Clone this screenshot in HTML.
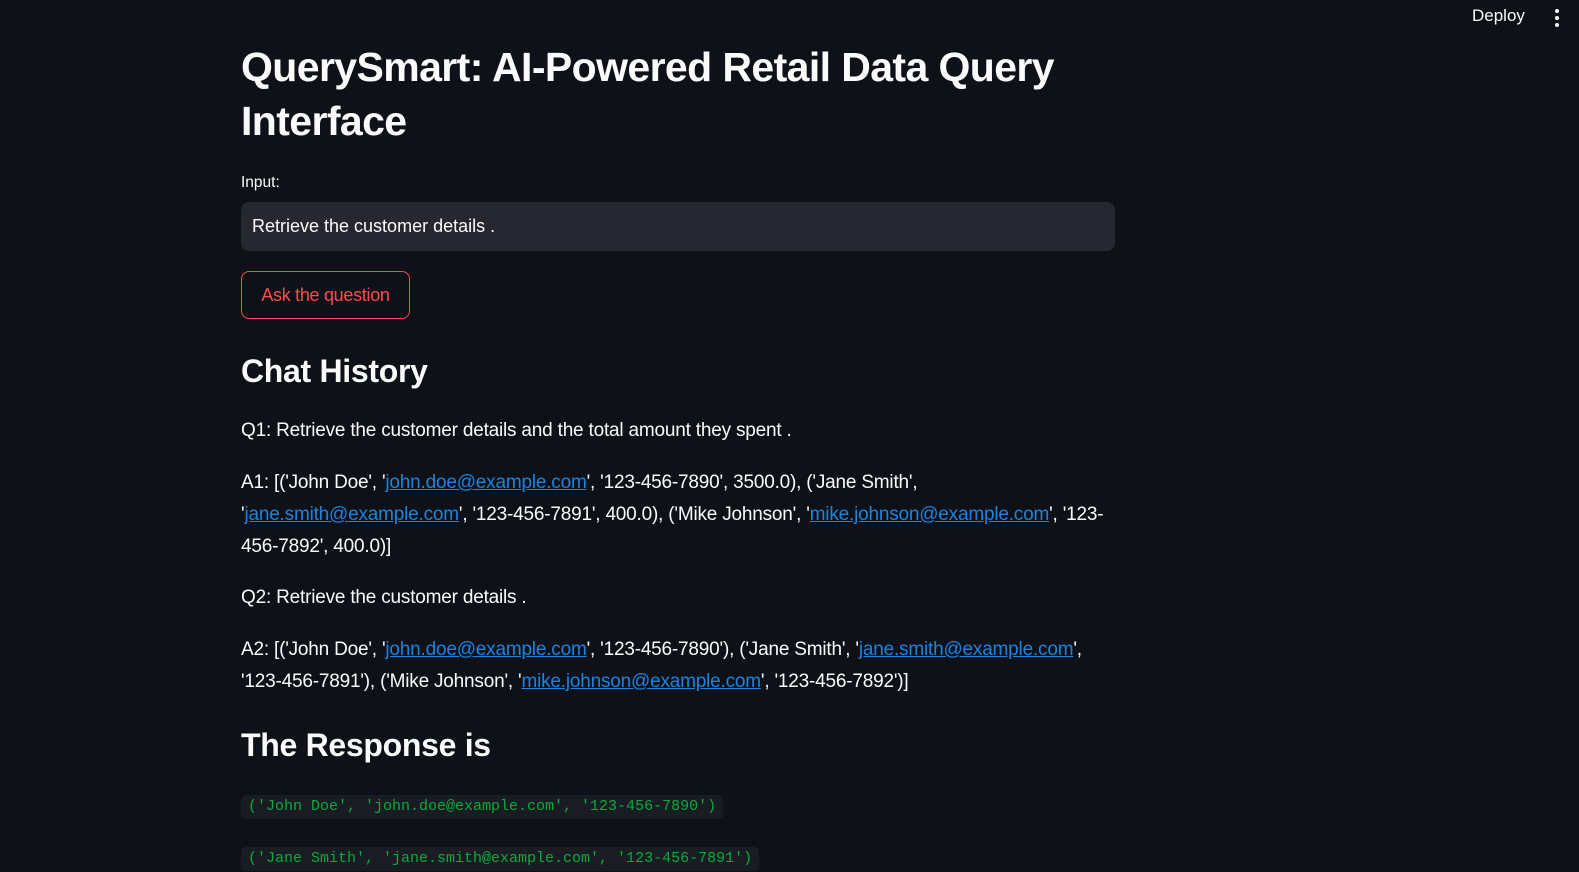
<!DOCTYPE html>
<html><head><meta charset="utf-8"><style>
body{margin:0;background:#0e1117;color:#fafafa;font-family:"Liberation Sans",sans-serif;width:1579px;height:872px;overflow:hidden;position:relative}
.main{position:absolute;left:241px;width:874px;top:0}
h1{font-size:41px;font-weight:bold;line-height:54px;margin:0;position:absolute;top:40px;letter-spacing:-0.6px;width:900px;white-space:nowrap}
.lbl{position:absolute;top:174px;font-size:15.5px}
.inp{position:absolute;top:202px;left:0;width:874px;height:49px;background:#262730;border-radius:8px;box-sizing:border-box;padding:14px 11px;font-size:18px}
.btn{position:absolute;top:271px;left:0;width:169px;height:48px;box-sizing:border-box;border:1px solid #ff4b4b;border-radius:8px;color:#ff4b4b;font-size:18px;text-align:center;line-height:46px;letter-spacing:-0.3px}
h2{font-size:32px;font-weight:bold;margin:0;position:absolute;letter-spacing:-0.3px}
p{position:absolute;margin:0;font-size:19px;line-height:32px;width:900px;letter-spacing:-0.2px;white-space:nowrap}
a{color:#1c83e1;text-decoration:underline}
code{position:absolute;font-family:"Liberation Mono",monospace;font-size:15px;color:#09ab3b;background:#1a1c24;border-radius:5px;padding:2px 7px;line-height:20px}
.top{position:absolute;top:6px;left:1472px;font-size:17px}
.dots{position:absolute;left:1555px;top:9px}
.dots i{display:block;width:4px;height:4px;border-radius:2px;background:#fafafa;margin-bottom:3px}
</style></head><body>
<div class="top">Deploy</div>
<div class="dots"><i></i><i></i><i></i></div>
<div class="main">
<h1>QuerySmart: AI-Powered Retail Data Query<br>Interface</h1>
<div class="lbl">Input:</div>
<div class="inp">Retrieve the customer details .</div>
<div class="btn">Ask the question</div>
<h2 style="top:353px">Chat History</h2>
<p style="top:415px">Q1: Retrieve the customer details and the total amount they spent .</p>
<p style="top:467px">A1: [('John Doe', '<a>john.doe@example.com</a>', '123-456-7890', 3500.0), ('Jane Smith',<br>'<a>jane.smith@example.com</a>', '123-456-7891', 400.0), ('Mike Johnson', '<a>mike.johnson@example.com</a>', '123-<br>456-7892', 400.0)]</p>
<p style="top:582px">Q2: Retrieve the customer details .</p>
<p style="top:634px">A2: [('John Doe', '<a>john.doe@example.com</a>', '123-456-7890'), ('Jane Smith', '<a>jane.smith@example.com</a>',<br>'123-456-7891'), ('Mike Johnson', '<a>mike.johnson@example.com</a>', '123-456-7892')]</p>
<h2 style="top:727px">The Response is</h2>
<code style="top:795px;left:0">('John Doe', 'john.doe@example.com', '123-456-7890')</code>
<code style="top:847px;left:0">('Jane Smith', 'jane.smith@example.com', '123-456-7891')</code>
</div>
</body></html>
